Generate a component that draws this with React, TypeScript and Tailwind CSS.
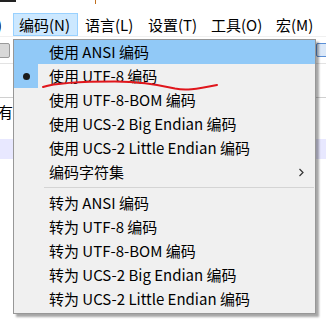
import React from "react";

const FONT = '"Noto Sans CJK SC", "Noto Sans", sans-serif';

function MenuRow({
  label,
  highlighted = false,
  checked = false,
  submenu = false,
}: {
  label: string;
  highlighted?: boolean;
  checked?: boolean;
  submenu?: boolean;
}) {
  return (
    <div
      className={`relative flex h-[24px] items-center ${highlighted ? "bg-[#91c9f7]" : ""}`}
    >
      <div
        className={`flex h-full w-[24px] items-center justify-center ${checked ? "bg-[#91c9f7]" : ""}`}
      >
        {checked && <div className="h-[7px] w-[7px] rounded-full bg-[#1a1a1a]" />}
      </div>
      <span className="pb-[2px] pl-[11px] text-[15px] leading-none text-black whitespace-nowrap">
        {label}
      </span>
      {submenu && (
        <svg
          className="absolute right-[10px] top-[8px]"
          width="7"
          height="9"
          viewBox="0 0 7 9"
        >
          <path d="M1.5 1 L5 4.5 L1.5 8" fill="none" stroke="#333" strokeWidth="1.2" />
        </svg>
      )}
    </div>
  );
}

export default function App() {
  const barItems: { label: string; w: string; pl: string; active?: boolean }[] = [
    { label: "编码(N)", w: "w-[65px]", pl: "pl-[5px]", active: true },
    { label: "语言(L)", w: "w-[63px]", pl: "pl-[6px]" },
    { label: "设置(T)", w: "w-[63px]", pl: "pl-[6px]" },
    { label: "工具(O)", w: "w-[65px]", pl: "pl-[6px]" },
    { label: "宏(M)", w: "w-[50px]", pl: "pl-[6px]" },
  ];

  return (
    <div
      className="relative h-[323px] w-[326px] overflow-hidden bg-white text-black"
      style={{ fontFamily: FONT }}
    >
      {/* top strip remnants */}
      <div className="relative h-[13px]">
        <div className="h-[2px] w-[16px] bg-[#222]" />
        <div className="absolute left-[95px] top-0 h-[4px] w-[1px] bg-[#c07020]" />
      </div>

      {/* menu bar */}
      <div className="flex h-[24px] items-stretch border-b border-[#f0f0f0]">
        <div className="flex w-[13px] items-center overflow-hidden">
          <span className="ml-[-3px] text-[15px] leading-none">)</span>
        </div>
        {barItems.map((it) => (
          <div
            key={it.label}
            className={`flex ${it.w} ${it.pl} items-center border ${
              it.active ? "border-[#99d1ff] bg-[#cce8ff]" : "border-transparent"
            }`}
          >
            <span className="text-[15px] leading-none whitespace-nowrap">{it.label}</span>
          </div>
        ))}
      </div>

      {/* toolbar */}
      <div className="flex h-[27px] items-center justify-between border-b border-[#e3e3e3]">
        <div className="ml-[-4px] h-[15px] w-[14px] rounded-[2px] border border-[#9a9a9a] bg-[#d8d8d8]" />
        <div className="mr-[-4px] h-[14px] w-[14px] rounded-[2px] border border-[#5b8fd6] bg-[#dbe8f8]" />
      </div>

      {/* tab bar */}
      <div className="h-[34px] border-b border-[#d0d0d0] bg-white" />

      {/* editor */}
      <div className="h-[41px] pt-[1px]">
        <span className="ml-[-2px] text-[15px] leading-[17px]">有</span>
      </div>
      <div className="h-[20px] bg-[#e8e8ff]" />

      {/* dropdown menu */}
      <div className="absolute left-[13px] top-[39px] w-[303px] border border-[#979797] bg-[#f0f0f0] pb-[2px] shadow-[3px_3px_2px_rgba(0,0,0,0.35)]">
        <MenuRow label="使用 ANSI 编码" highlighted />
        <MenuRow label="使用 UTF-8 编码" checked />
        <MenuRow label="使用 UTF-8-BOM 编码" />
        <MenuRow label="使用 UCS-2 Big Endian 编码" />
        <MenuRow label="使用 UCS-2 Little Endian 编码" />
        <MenuRow label="编码字符集" submenu />
        <div className="flex h-[7px] items-center pl-[30px] pr-[1px]">
          <div className="h-[1px] w-full bg-[#d4d4d4]" />
        </div>
        <MenuRow label="转为 ANSI 编码" />
        <MenuRow label="转为 UTF-8 编码" />
        <MenuRow label="转为 UTF-8-BOM 编码" />
        <MenuRow label="转为 UCS-2 Big Endian 编码" />
        <MenuRow label="转为 UCS-2 Little Endian 编码" />
      </div>

      {/* red hand-drawn underline annotation */}
      <svg
        className="pointer-events-none absolute left-0 top-0"
        width="326"
        height="323"
        viewBox="0 0 326 323"
      >
        <path
          d="M43 87 C 55 83, 80 81.5, 115 81.5 C 140 81.5, 160 85, 175 88.5 C 185 90.5, 195 89.5, 217 85"
          fill="none"
          stroke="#e0161c"
          strokeWidth="2"
          strokeLinecap="round"
        />
      </svg>
    </div>
  );
}
